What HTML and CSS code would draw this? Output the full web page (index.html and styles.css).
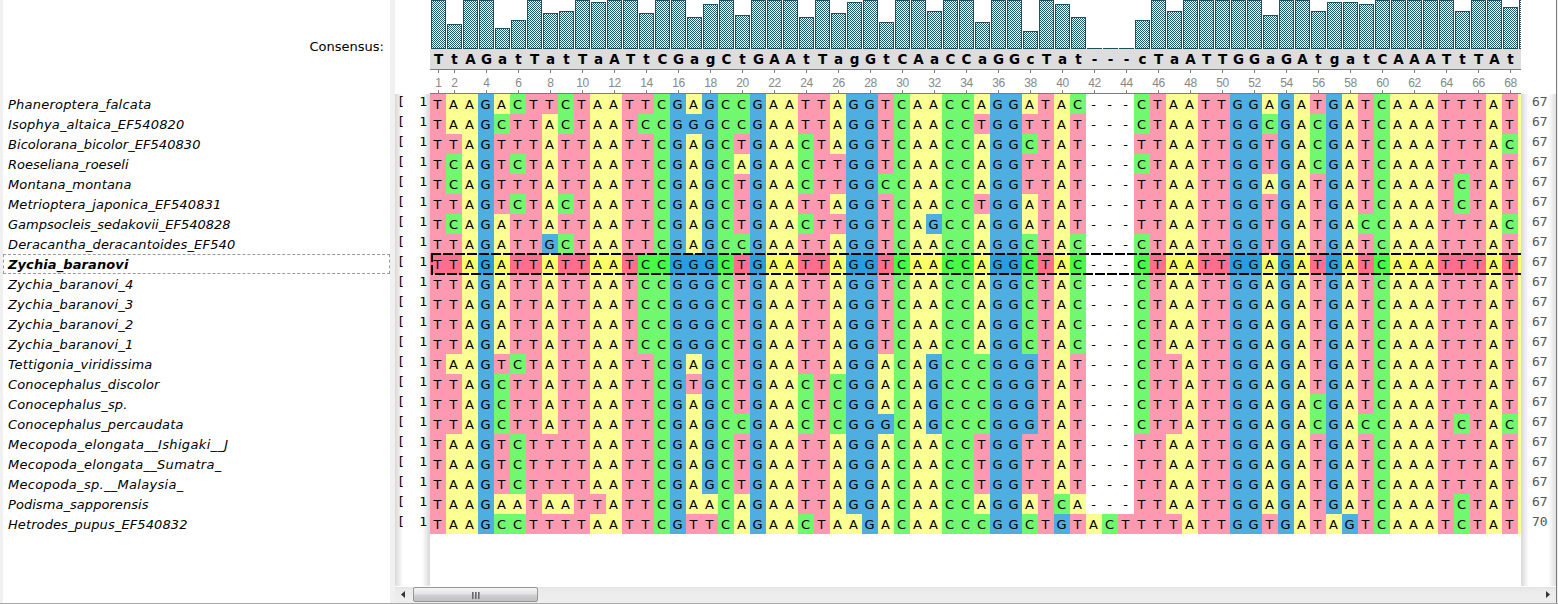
FILE: index.html
```html
<!DOCTYPE html>
<html lang="en">
<head>
<meta charset="utf-8">
<title>Alignment</title>
<link rel="stylesheet" href="styles.css">
</head>
<body>
<div class="app">
  <section class="names">
    <div class="consensus-label">Consensus:</div>
    <div id="names"></div>
  </section>
  <main class="viewer">
    <div class="view-body">
      <div class="side side-start"><div class="side-col" id="starts"></div></div>
      <div class="msa">
        <div class="bars" id="bars"></div>
        <div class="consensus" id="consensus"></div>
        <div class="ruler" id="ruler"></div>
        <div class="grid" id="grid"></div>
      </div>
      <div class="side side-end"><div class="side-col" id="ends"></div></div>
    </div>
    <div class="scrollbar">
      <svg class="arrow" viewBox="0 0 18 15"><path d="M10 4v7L6 7.5z" fill="#333"/></svg>
      <div class="thumb"><i></i><i></i><i></i></div>
      <div class="track"></div>
      <svg class="arrow" viewBox="0 0 18 15"><path d="M8 4v7l4-3.5z" fill="#333"/></svg>
    </div>
  </main>
  <div class="edge"></div>
</div>
<script src="app.js"></script>
</body>
</html>
```
FILE: styles.css
```css
* { box-sizing: border-box; }
body { margin: 0; background: #f0f0f0; font-family: "DejaVu Sans", sans-serif; color: #000; overflow: hidden; }
.app { display: flex; width: 1558px; height: 604px; padding-left: 3px; border-bottom: 1px solid #a8a8a8; }
.names { width: 387px; background: #fff; font-size: 13px; }
.consensus-label { height: 94px; padding: 38px 6px 0 0; text-align: right; line-height: 17px; }
.name { height: 20px; line-height: 21px; padding-left: 5px; font-style: italic; white-space: pre; }
.name.active { font-weight: bold; border: 1px dashed #999; line-height: 19px; padding-left: 4px; }
.viewer { display: flex; flex-direction: column; width: 1161px; margin-left: 5px; background: #fff; }
.view-body { display: flex; height: 587px; }
.side { width: 35px; padding-top: 94px; font-family: "DejaVu Sans Mono", monospace; font-size: 13px; }
.side-col { height: 492px; }
.side-start .side-col { background: linear-gradient(90deg, #d8d8d8, #fff 8px, #fff 27px, #d8d8d8); }
.side-end .side-col { background: linear-gradient(90deg, #d8d8d8, #fff 8px, #fff 27px, #e0e0e0); }
.side-row { display: flex; justify-content: space-between; height: 20px; line-height: 16px; padding: 0 3px 0 2px; }
.side-end .side-row { padding-left: 11px; color: #555; }
.msa { width: 1091px; overflow: hidden; }
.bars { display: flex; align-items: flex-end; height: 49px; }
.bar { flex: none; width: 15px; margin-left: 1px; border: 1px solid #1f5060; background: #fff left bottom / 4px 4px url("data:image/svg+xml,%3Csvg xmlns='http://www.w3.org/2000/svg' width='4' height='4' shape-rendering='crispEdges'%3E%3Cpath fill='%231f5a6e' d='M0 0h1v1H0zM2 0h1v1H2zM1 1h1v1H1zM3 1h1v1H3zM0 2h1v1H0zM2 2h1v1H2zM1 3h1v1H1zM3 3h1v1H3z'/%3E%3C/svg%3E"); }
.consensus { display: flex; height: 20px; background: #ddd; font-weight: bold; font-size: 13.5px; line-height: 21px; }
.consensus span { flex: none; width: 16px; padding-left: 1px; text-align: center; }
.ruler { display: flex; height: 25px; border-top: 1px solid #7c7c7c; border-bottom: 1px solid #7c7c7c; font: 12px/20px "Liberation Sans", sans-serif; letter-spacing: -.4px; color: #888; }
.tick { display: flex; justify-content: center; flex: none; width: 16px; padding: 3px 0 0 1px; background: linear-gradient(#7c7c7c, #7c7c7c) 8px 0 / 1px 3px no-repeat, linear-gradient(#7c7c7c, #7c7c7c) 8px 100% / 1px 3px no-repeat; }
.tick.blank { background: none; }
.row { position: relative; display: flex; height: 20px; font-size: 13px; line-height: 21px; }
.row span { flex: none; width: 16px; height: 20px; padding-right: 1px; text-align: center; }
.a { background: #fcff92; }
.c { background: #70f970; }
.g { background: #4eade1; }
.t { background: #ff99b1; }
.selected .a { background: #fdff66; }
.selected .c { background: #46fa46; }
.selected .g { background: #289ede; }
.selected .t { background: #ff6d8f; }
.marquee { position: absolute; z-index: 1; left: 1px; right: 0; top: -1px; width: 1090px; height: 22px; background:
  repeating-linear-gradient(90deg, #000 0 10px, transparent 10px 12px) 0 0 / 100% 2px no-repeat,
  repeating-linear-gradient(90deg, #000 0 2px, transparent 2px 4px, #000 4px 12px) 0 100% / 100% 2px no-repeat,
  repeating-linear-gradient(#000 0 9px, transparent 9px 12px) 0 0 / 2px 100% no-repeat; }
.scrollbar { display: flex; height: 16px; background: linear-gradient(#e2e2e2, #ebebeb 3px, #eee); }
.arrow { width: 18px; height: 15px; }
.thumb { display: flex; justify-content: center; gap: 1px; width: 125px; height: 15px; padding-top: 4px; border: 1px solid #979797; border-radius: 2px; background: linear-gradient(#f4f4f4, #e4e4e6 45%, #cfcfd2 55%, #c0c0c4); }
.thumb i { width: 2px; height: 7px; background: linear-gradient(90deg, #555, #aaa); }
.track { flex: 1; }
.edge { width: 1px; background: #7a7a7a; }
```
FILE: app.js
```js
// name, sequence, drawn width of the name in pixels
const rows = [
  ["Phaneroptera_falcata", "TAAGACTTCTAATTCGAGCCGAATTAGGTCAACCAGGATAC---CTAATTGGAGATGATCAAATTTAT", 143],
  ["Isophya_altaica_EF540820", "TAAGCTTACTAATCCGGGCCGAATTAGGTCAACCTGGTTAT---CTAATTGGCGACGATCAAATTTAT", 176],
  ["Bicolorana_bicolor_EF540830", "TTAGTTTATTAATTCGAGCTGAACTAGGTCAACCAGGCTAT---TTAATTGGTGACGATCAAATTTAC", 192],
  ["Roeseliana_roeseli", "TCAGTCTATTAATTCGAGCAGAACTTGGTCAACCAGGTTAT---CTAATTGGTGACGATCAAATTTAT", 120],
  ["Montana_montana", "TCAGTTTATTAATTCGAGCTGAACTTGGCCAACCAGGTTAT---TTAATTGGAGATGATCAAATCTAT", 123],
  ["Metrioptera_japonica_EF540831", "TTAGTCTACTAATTCGAGCTGAATTAGGTCAACCTGGATAT---TTAATTGGTGATGATCAAATCTAT", 213],
  ["Gampsocleis_sedakovii_EF540828", "TCAGATTATTAATTCGAGCTGAACTTGGTCAGCCAGGATAT---TTAATTGGTGATGACCAAATTTAC", 222],
  ["Deracantha_deracantoides_EF540", "TTAGATTGCTAATTCGAGCCGAATTAGGTCAACCAGGCTAC---CTAATTGGTGATGATCAAATTTAT", 227],
  ["Zychia_baranovi", "TTAGATTATTAATCCGGGCTGAATTAGGTCAACCAGGCTAC---CTAATTGGAGATGATCAAATTTAT", 120],
  ["Zychia_baranovi_4", "TTAGATTATTAATCCGGGCTGAATTAGGTCAACCAGGCTAC---CTAATTGGAGATGATCAAATTTAT", 125],
  ["Zychia_baranovi_3", "TTAGATTATTAATCCGGGCTGAATTAGGTCAACCAGGCTAC---CTAATTGGAGATGATCAAATTTAT", 125],
  ["Zychia_baranovi_2", "TTAGATTATTAATCCGGGCTGAATTAGGTCAACCAGGCTAC---CTAATTGGAGATGATCAAATTTAT", 125],
  ["Zychia_baranovi_1", "TTAGATTATTAATCCGGGCTGAATTAGGTCAACCAGGCTAC---CTAATTGGAGATGATCAAATTTAT", 125],
  ["Tettigonia_viridissima", "TAAGTCTATTAATTCGAGCTGAATTAGGACAGCCCGGGTAT---CTTATTGGAGATGATCAAATTTAT", 144],
  ["Conocephalus_discolor", "TTAGCTTATTAATTCGTGCTGAACTCGGACAGCCCGGGTAT---CTTATTGGAGATGATCAAATTTAT", 151],
  ["Conocephalus_sp.", "TTAGCTTATTAATTCGAGCTGAACTCGGACAGCCCGGGTAT---CTTATTGGAGACGATCAAATTTAT", 119],
  ["Conocephalus_percaudata", "TTAGCTTATTAATTCGAGCCGAACTCGGGCAGCCCGGGTAT---CTTATTGGAGACGACCAAATCTAC", 175],
  ["Mecopoda_elongata__Ishigaki__J", "TAAGTCTTTTAATTCGAGCTGAATTAGGACAACCTGGTTAT---TTAATTGGAGATGATCAAATTTAT", 220],
  ["Mecopoda_elongata__Sumatra_", "TAAGTCTTTTAATTCGAGCTGAATTAGGACAACCTGGTTAT---TTAATTGGAGATGATCAAATTTAT", 213],
  ["Mecopoda_sp.__Malaysia_", "TAAGTCTTTTAATTCGAGCTGAATTAGGACAACCTGGTTAT---TTAATTGGAGATGATCAAATTTAT", 175],
  ["Podisma_sapporensis", "TAAGAATAATTATTCGAACAGAATTAGGACAACCAGGATCA---TTAATTGGAGATGATCAAATCTAT", 140],
  ["Hetrodes_pupus_EF540832", "TAAGCCTTTTAATTCGTTCAGAACTAAGACAACCCGGCTGTACTTTTATTGGTGATAGTCAAATCTAT", 179]
];
const consensus = "TtAGatTatTaATtCGagCtGAAtTagGtCAaCCaGGcTat---cTaATTGGaGAtgatCAAATtTAt";
const heights = [49,25,49,49,21,29,49,36,38,49,47,49,49,36,49,49,32,45,49,34,49,49,49,32,49,36,47,49,27,49,49,38,49,49,27,49,49,18,49,45,32,1,1,1,29,49,38,49,49,49,49,49,34,49,49,38,47,47,45,49,49,49,49,49,38,49,49,42,49];
const fill = (id, html) => { document.getElementById(id).innerHTML = html; };
const active = 8;

fill("names", rows.map(([n], i) => `<div class="name${i === active ? " active" : ""}"><span>${n}</span></div>`).join(""));
document.querySelectorAll(".name span").forEach((el, i) => {
  const [name, , width] = rows[i];
  el.style.letterSpacing = (width + 0.5 - el.getBoundingClientRect().width) / name.length + "px";
});
fill("starts", rows.map(() => `<div class="side-row"><span>[</span><span>1</span></div>`).join(""));
fill("ends", rows.map((r, i) => `<div class="side-row">${i === rows.length - 1 ? 70 : 67}</div>`).join(""));
fill("bars", heights.map(h => `<div class="bar" style="height:${h}px${h === 1 ? ";border-bottom:0" : ""}"></div>`).join(""));
fill("consensus", [...consensus].map(c => `<span>${c}</span>`).join(""));
fill("ruler", [...consensus].map((_, i) => {
  const n = i + 1;
  return n === 1 || n % 2 === 0 ? `<div class="tick">${n}</div>` : `<div class="tick blank"></div>`;
}).join(""));
fill("grid", rows.map(([, s], i) =>
  `<div class="row${i === active ? " selected" : ""}">${i === active ? '<div class="marquee"></div>' : ""}` +
  [...s].map(c => `<span class="${c === "-" ? "gap" : c.toLowerCase()}">${c}</span>`).join("") +
  `<span class="a"></span></div>`).join(""));
```
